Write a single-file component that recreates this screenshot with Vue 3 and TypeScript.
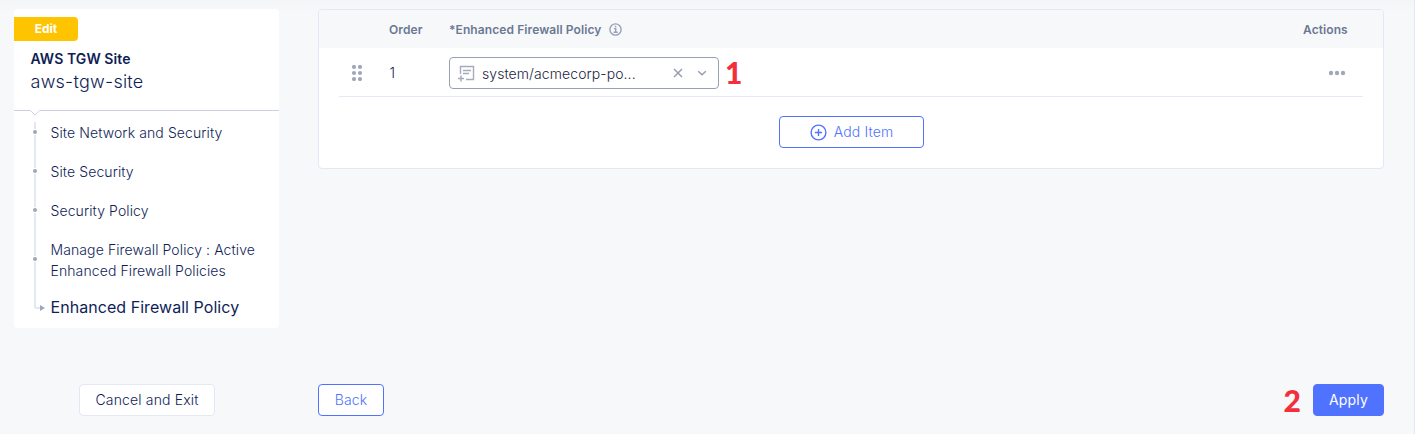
<script setup lang="ts">
interface Step {
  lines: string[]
}

const steps: Step[] = [
  { lines: ['Site Network and Security'] },
  { lines: ['Site Security'] },
  { lines: ['Security Policy'] },
  { lines: ['Manage Firewall Policy : Active', 'Enhanced Firewall Policies'] },
]
</script>

<template>
  <div class="page">
    <div class="content">
      <aside class="sidebar">
        <header class="side-head">
          <span class="badge">Edit</span>
          <div class="kind">AWS TGW Site</div>
          <div class="name">aws-tgw-site</div>
        </header>
        <svg class="divider" width="265" height="7" viewBox="0 0 265 7" fill="none">
          <path d="M0 .5H16.5L21 5L25.5 .5H265" stroke="#cbd0e3" />
        </svg>
        <nav class="steps">
          <div v-for="(step, i) in steps" :key="i" class="step">
            <span class="rail"><i class="dot"></i></span>
            <a class="label"><span v-for="line in step.lines" :key="line">{{ line }}</span></a>
          </div>
          <div class="step current">
            <svg class="elbow" width="12" height="15" viewBox="0 0 12 15" fill="none">
              <path d="M2 0V9.5Q2 11 3.5 11H7" stroke="#e4e7f4" stroke-width="2" transform="translate(0 -2)" />
              <path d="M7 6L12 9L7 12Z" fill="#a0a7ba" />
            </svg>
            <a class="label">Enhanced Firewall Policy</a>
          </div>
        </nav>
      </aside>

      <main class="panel">
        <div class="row head">
          <span></span>
          <span class="h-order">Order</span>
          <span class="h-policy">
            <span class="h-text">*Enhanced Firewall Policy</span>
            <svg width="13" height="13" viewBox="0 0 13 13" fill="none" stroke="#98a0b5">
              <circle cx="6.5" cy="6.5" r="5.6" stroke-width="1.4" />
              <path d="M4.9 5.6H6.7V9M4.5 9.3H8.7" stroke-width="1.4" />
              <path d="M5.8 3.5H7.3" stroke-width="1.5" />
            </svg>
          </span>
          <span class="h-actions">Actions</span>
        </div>
        <div class="row item">
          <svg class="grip" width="12" height="16" viewBox="0 0 12 16" fill="#a0a7ba">
            <circle cx="3" cy="2" r="2.1" /><circle cx="9" cy="2" r="2.1" />
            <circle cx="3" cy="8" r="2.1" /><circle cx="9" cy="8" r="2.1" />
            <circle cx="3" cy="14" r="2.1" /><circle cx="9" cy="14" r="2.1" />
          </svg>
          <span class="number">1</span>
          <div class="policy">
            <div class="select">
              <svg class="doc" width="17" height="17" viewBox="0 0 17 17" fill="none" stroke="#a5abbd">
                <path d="M2.5 9V1.5H15.5V14.5H8" stroke-width="1.4" />
                <path d="M5 5.5H13M5 8.5H11" stroke-width="1.4" />
                <path d="M0 13.5H6M3 10.5V16.5" stroke-width="1.5" />
              </svg>
              <span class="value">system/acmecorp-po...</span>
              <svg class="clear" width="10" height="10" viewBox="0 0 10 10" fill="none">
                <path d="M1 1L9 9M9 1L1 9" stroke="#979eb0" stroke-width="1.5" />
              </svg>
              <svg class="chevron" width="10" height="10" viewBox="0 0 10 10" fill="none">
                <path d="M1.2 3.2L5 6.8L8.8 3.2" stroke="#979eb0" stroke-width="1.5" />
              </svg>
            </div>
            <b class="callout one">1</b>
          </div>
          <svg class="more" width="18" height="6" viewBox="0 0 18 6" fill="#a0a7ba">
            <circle cx="3" cy="3" r="2.2" /><circle cx="9" cy="3" r="2.2" /><circle cx="15" cy="3" r="2.2" />
          </svg>
        </div>
        <button class="btn add">
          <svg width="17" height="17" viewBox="0 0 17 17" fill="none" stroke="#4f73ff" stroke-width="1.4">
            <circle cx="8.5" cy="8.5" r="7.4" />
            <path d="M8.5 4.9V12.1M4.9 8.5H12.1" />
          </svg>
          <span class="txt">Add Item</span>
        </button>
      </main>
    </div>

    <footer class="footer">
      <button class="btn cancel"><span class="txt">Cancel and Exit</span></button>
      <button class="btn back"><span class="txt">Back</span></button>
      <b class="callout two">2</b>
      <button class="btn apply"><span class="txt">Apply</span></button>
    </footer>
  </div>
</template>

<style>
body {
  margin: 0;
  background: #f7f8fa;
}
</style>

<style scoped>
.page {
  box-sizing: border-box;
  width: 1415px;
  height: 434px;
  padding: 9px 30px 18px 14px;
  border-right: 1px solid #e4e7f4;
  background: linear-gradient(#f4f5f7, #f7f8fa 12px);
  display: flex;
  flex-direction: column;
  justify-content: space-between;
  overflow: hidden;
  font-family: Inter, "Liberation Sans", sans-serif;
  font-size: 14px;
  font-weight: 300;
  color: #0f1e57;
}
.content {
  display: flex;
  align-items: flex-start;
  gap: 39px;
}
.sidebar {
  width: 265px;
  height: 319px;
  border-radius: 4px;
  background: #fff;
}
.side-head {
  box-sizing: border-box;
  height: 101px;
  padding-top: 8px;
}
.badge {
  display: block;
  width: 64px;
  height: 24px;
  border-radius: 0 4px 4px 0;
  background: #ffc400;
  color: #fff;
  font-size: 12px;
  font-weight: 700;
  line-height: 24px;
  text-align: center;
}
.kind {
  margin: 8px 0 0 16.5px;
  font-size: 14px;
  font-weight: 600;
  line-height: 20px;
  letter-spacing: 0.08px;
}
.name {
  margin-left: 16.5px;
  font-size: 18px;
  line-height: 26px;
  letter-spacing: 0.25px;
}
.divider {
  display: block;
}
.steps {
  padding: 5px 0 0 19px;
}
.step {
  display: flex;
  gap: 13.5px;
}
.rail {
  width: 4px;
  display: flex;
  align-items: center;
  justify-content: center;
  background: linear-gradient(#e4e7f4, #e4e7f4) center / 2px 100% no-repeat;
}
.dot {
  width: 4px;
  height: 4px;
  border-radius: 50%;
  background: #a0a7ba;
  box-shadow: 0 0 0 1px #fff;
  margin-top: -20px;
}
.label {
  display: flex;
  flex-direction: column;
  line-height: 21px;
  letter-spacing: 0.1px;
  padding-bottom: 18px;
  white-space: nowrap;
}
.current {
  gap: 5.5px;
}
.elbow {
  overflow: visible;
}
.current .label {
  font-size: 16px;
  font-weight: 400;
  line-height: 26px;
  letter-spacing: 0.05px;
  margin-top: -5px;
  padding: 0;
}
.panel {
  box-sizing: border-box;
  width: 1066px;
  height: 160px;
  border: 1px solid #e4e7f4;
  border-radius: 4px;
  background: #fff;
  overflow: hidden;
}
.row {
  display: grid;
  grid-template-columns: 50px 60px 1fr 60px;
  align-items: center;
}
.head {
  height: 38px;
  padding: 0 20px;
  background: #f7f8fa;
  color: #6b7894;
  font-size: 12px;
  font-weight: 600;
  letter-spacing: 0.09px;
}
.h-policy {
  display: flex;
  align-items: center;
  gap: 8px;
}
.item {
  height: 48px;
  margin: 0 20px;
  border-bottom: 1px solid #e4e7f4;
}
.grip {
  margin: 2px 0 0 12px;
}
.number {
  padding: 1px 0 0 0.5px;
}
.policy {
  display: flex;
  align-items: center;
  gap: 6px;
}
.select {
  box-sizing: border-box;
  width: 270px;
  height: 32px;
  margin-top: 2px;
  padding: 0 11px 0 8px;
  border: 1px solid #98a0b5;
  border-radius: 4px;
  display: flex;
  align-items: center;
}
.value {
  margin: 1px auto 0 7px;
  color: #1b2540;
  letter-spacing: 0.08px;
}
.clear {
  margin-right: 14px;
}
.more {
  margin: 2px 0 0 25px;
}
.callout {
  font-family: Lato, "Open Sans", sans-serif;
  font-size: 30px;
  font-weight: 900;
  line-height: 32px;
  color: #f22f3a;
}
.btn {
  box-sizing: border-box;
  height: 32px;
  padding: 0;
  border: 1px solid #4f73ff;
  border-radius: 4px;
  background: #fff;
  color: #4f73ff;
  font: inherit;
  letter-spacing: 0.15px;
  display: flex;
  align-items: center;
  justify-content: center;
}
.txt {
  padding-bottom: 1px;
}
.add {
  width: 145px;
  margin: 19px 0 0 460px;
  gap: 7px;
}
.footer {
  display: flex;
  align-items: center;
}
.cancel {
  width: 136px;
  margin-left: 65px;
  border-color: #e4e7f4;
  color: #0f1e57;
}
.back {
  width: 66px;
  margin-left: 103px;
}
.two {
  margin: 0 12px 0 auto;
}
.apply {
  width: 71px;
  background: #4f73ff;
  color: #fff;
  font-weight: 400;
}
</style>
